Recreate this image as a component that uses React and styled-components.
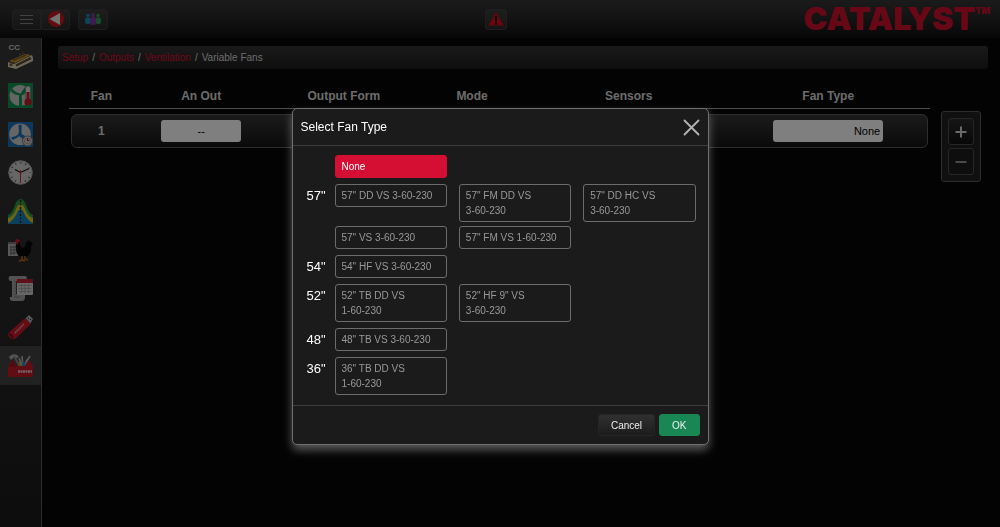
import React, { useState } from 'react';
import styled, { createGlobalStyle } from 'styled-components';

const GlobalStyle = createGlobalStyle`
  * {
    box-sizing: border-box;
  }

  body {
    margin: 0;
    background: #060606;
    color: #d8d8d8;
    font-family: 'Liberation Sans', Arial, sans-serif;
    font-size: 10px;
  }

  button, select {
    font-family: inherit;
    cursor: pointer;
  }
`;

const Page = styled.div`
  min-height: 100vh;
  display: flex;
  flex-direction: column;
`;

const TopBar = styled.header`
  height: 38px;
  padding: 0 10px 0 12px;
  display: grid;
  grid-template-columns: 1fr auto 1fr;
  align-items: center;
  background: linear-gradient(#363636, #262626 50%, #0e0e0e);
`;

const ToolGroup = styled.div`
  display: flex;
  gap: 8px;
`;

const ButtonPair = styled.div`
  display: flex;
`;

const ToolButton = styled.button`
  width: ${props => props.$width || 29}px;
  height: 21px;
  padding: 0;
  display: flex;
  align-items: center;
  justify-content: center;
  background: linear-gradient(#3c3c3c, #2a2a2a);
  border: 1px solid #3c3c3c;
  border-radius: ${props => props.$radius || '3px'};
`;

const AlertButton = styled(ToolButton)`
  margin-right: 10px;
`;

const Logo = styled.div`
  justify-self: end;
  display: flex;
  align-items: flex-start;
  color: #d0102e;
  font-family: Inter, 'Liberation Sans', sans-serif;
  font-size: 32px;
  font-weight: 900;
  line-height: 38px;
`;

const Trademark = styled.sup`
  font-size: 9px;
  line-height: 22px;
`;

const Body = styled.div`
  flex: 1;
  display: flex;
`;

const SideBar = styled.nav`
  width: 42px;
  background: linear-gradient(#383838, #1a1a1a);
  border-right: 1px solid #585858;
`;

const SideList = styled.ul`
  height: 347px;
  margin: 0;
  padding: 0;
  list-style: none;
  display: grid;
  grid-auto-rows: 1fr;
`;

const SideItem = styled.li`
  display: flex;
  background: ${props => (props.$active ? '#424242' : 'transparent')};
`;

const SideLink = styled.a`
  flex: 1;
  display: flex;
  flex-direction: column;
  align-items: center;
  justify-content: center;
  color: #d0d0d0;
  font-size: 8px;
  line-height: 8px;
  font-weight: bold;
  text-decoration: none;
`;

const SideLabel = styled.span`
  width: 24px;
`;

const Main = styled.main`
  flex: 1;
  padding: 8px 12px 0 16px;
`;

const Breadcrumb = styled.nav`
  height: 23px;
  padding: 0 4px;
  display: flex;
  align-items: center;
  gap: 4px;
  background: linear-gradient(#343434, #1c1c1c);
  border-radius: 3px;
`;

const Crumb = styled.a`
  color: #dc1034;
  text-decoration: none;
`;

const Content = styled.div`
  display: flex;
  align-items: flex-start;
  gap: 11px;
  padding: 14px 7px 0 11px;
`;

const FanTable = styled.table`
  flex: 1;
  display: block;
`;

const TableSection = styled.thead`
  display: block;
`;

const TableRow = styled.tr`
  display: grid;
  grid-template-columns: 59fr 141fr 145fr 112fr 202fr 198fr;
  align-items: center;
`;

const HeadRow = styled(TableRow)`
  height: 26px;
  padding: 0 3px;
  border-bottom: 1px solid #9a9a9a;
`;

const FanRow = styled(TableRow)`
  height: 34px;
  margin: 5px 2px 0;
  background: linear-gradient(#363636, #141414);
  border: 1px solid #5a5a5a;
  border-radius: 6px;
`;

const HeadCell = styled.th`
  padding: 0;
  color: #d8d8d8;
  font-size: 12px;
  text-align: center;
`;

const Cell = styled.td`
  padding: 0;
  display: flex;
  justify-content: center;
  font-size: 12px;
  font-weight: bold;
`;

const OutSelect = styled.select`
  width: 80px;
  height: 22px;
  padding: 0;
  appearance: none;
  background: #fff;
  border: none;
  border-radius: 3px;
  color: #000;
  font-size: 11px;
  text-align: center;
  text-align-last: center;
`;

const TypeButton = styled.button`
  width: 110px;
  height: 22px;
  padding: 0 3px;
  background: #fff;
  border: none;
  border-radius: 3px;
  color: #000;
  font-size: 11px;
  text-align: right;
`;

const RowControls = styled.div`
  width: 40px;
  margin-top: 28px;
  padding: 6px;
  display: flex;
  flex-direction: column;
  gap: 3px;
  background: #202020;
  border: 1px solid #5c5c5c;
  border-radius: 3px;
`;

const RowButton = styled.button`
  height: 27px;
  padding: 0;
  display: flex;
  align-items: center;
  justify-content: center;
  background: linear-gradient(#2c2c2c, #101010);
  border: 1px solid #4c4c4c;
  border-radius: 3px;
  color: #d4d4d4;

  &:disabled {
    background: #1c1c1c;
    color: #949494;
  }
`;

const Backdrop = styled.div`
  position: fixed;
  inset: 0;
  padding-top: 108px;
  display: flex;
  align-items: flex-start;
  justify-content: center;
  background: rgba(0, 0, 0, 0.5);
`;

const Dialog = styled.div`
  width: 417px;
  background: #1b1b1b;
  border: 1px solid #707070;
  border-radius: 5px;
  box-shadow: 0 5px 10px rgba(255, 255, 255, 0.35);
`;

const DialogHeader = styled.div`
  height: 37px;
  padding: 0 8px;
  display: flex;
  align-items: center;
  justify-content: space-between;
  border-bottom: 1px solid #3c3c3c;
`;

const DialogTitle = styled.h2`
  margin: 0;
  color: #fff;
  font-size: 12px;
  font-weight: normal;
`;

const CloseButton = styled.button`
  padding: 0;
  display: flex;
  background: none;
  border: none;
  color: #b4b4b4;
`;

const DialogBody = styled.div`
  padding: 9px 12px 10px;
  display: flex;
  flex-direction: column;
  gap: 6px;
`;

const SizeGroup = styled.div`
  display: grid;
  grid-template-columns: 22px 1fr;
  gap: 8px;
`;

const SizeLabel = styled.div`
  padding-left: 2px;
  color: #fff;
  font-size: 13px;
  line-height: 23px;
`;

const Options = styled.div`
  display: grid;
  grid-template-columns: repeat(3, 1fr);
  align-items: start;
  gap: 4px 12px;
`;

const Option = styled.button`
  padding: 3px 6px;
  background: ${props => (props.$selected ? '#d50f34' : 'transparent')};
  border: 1px solid ${props => (props.$selected ? '#d50f34' : '#6c6c6c')};
  border-radius: 3px;
  color: ${props => (props.$selected ? '#fff' : '#999')};
  font-size: 10px;
  line-height: 15px;
  text-align: left;
`;

const DialogFooter = styled.div`
  height: 39px;
  padding: 0 8px;
  display: flex;
  align-items: center;
  justify-content: flex-end;
  gap: 4px;
  border-top: 1px solid #3c3c3c;
`;

const FooterButton = styled.button`
  height: 22px;
  padding: 0 12px;
  background: ${props => (props.$primary ? '#198754' : 'linear-gradient(#303030, #1c1c1c)')};
  border: 1px solid ${props => (props.$primary ? '#198754' : '#262626')};
  border-radius: 3px;
  color: #eee;
  font-size: 10px;
`;

const Icon = ({ children }) => (
  <svg width="25" height="25" viewBox="0 0 25 25" aria-hidden="true">
    {children}
  </svg>
);

const MenuIcon = () => (
  <svg width="13" height="11" viewBox="0 0 13 11" stroke="#848484" aria-hidden="true">
    <path d="M0 1.5h13M0 5.5h13M0 9.5h13" />
  </svg>
);

const BackIcon = () => (
  <svg width="16" height="16" viewBox="0 0 16 16" aria-hidden="true">
    <circle cx="8" cy="8" r="8" fill="#c41820" />
    <path d="M1.5 8L12 2v12z" fill="#e4e4e4" />
  </svg>
);

const UsersIcon = () => (
  <svg width="16" height="12" viewBox="0 0 16 12" aria-hidden="true">
    <circle cx="3" cy="2.5" r="1.8" fill="#1a86b8" />
    <rect y="4.5" width="5.5" height="6.5" rx="2" fill="#1a86b8" />
    <circle cx="13" cy="2.5" r="1.8" fill="#2e9a50" />
    <rect x="10.5" y="4.5" width="5.5" height="6.5" rx="2" fill="#2e9a50" />
    <circle cx="8" cy="2" r="2" fill="#7c36a0" />
    <rect x="5" y="4" width="6" height="8" rx="2" fill="#7c36a0" />
  </svg>
);

const AlertIcon = () => (
  <svg width="16" height="14" viewBox="0 0 16 14" aria-hidden="true">
    <path d="M8 .5L16 13.5H0z" fill="#d00c14" />
    <path d="M7 4h2v5.5H7zM7 10.500h2v2H7z" fill="#180000" />
  </svg>
);

const HouseIcon = () => (
  <svg width="25" height="18" viewBox="0 0 25 18" aria-hidden="true">
    <path d="M1 11l16-8 7 2v4L8 17l-7-2z" fill="#3c2c14" />
    <path d="M1 9L17 2l6 1L7 11z" fill="#c8912c" />
    <path d="M5 8.5L18 3" stroke="#7c5c20" strokeWidth="1.5" />
    <path d="M0 10l6 2L24 3l1 3v3L8 17l-8-2z" fill="#d8ceb0" />
    <path d="M8 13.5L23 6" stroke="#54462c" strokeWidth="2.4" />
    <path d="M1.5 11.5h3v2.5h-3z" fill="#6c603c" />
    <path d="M12 3.5v-2M15 2.5v-2" stroke="#777" />
  </svg>
);

const FanTempIcon = () => (
  <Icon>
    <rect width="25" height="25" fill="#109550" />
    <circle cx="12" cy="12.5" r="10.5" fill="#c8c8c8" />
    <path d="M12 12.5Q6 12 2.5 8L4.5 5.5q2 4 8 5zM12 12q2-4 5-8l3 2q-2 5-7 7zM11 12h2.5q1 5 .5 11h-3z" fill="#109550" />
    <rect x="17.5" y="3" width="5" height="16" rx="2.5" fill="#ddd" stroke="#666" strokeWidth=".6" />
    <circle cx="20" cy="19" r="3.6" fill="#c41828" />
    <path d="M18.5 9h3v9h-3z" fill="#c41828" />
  </Icon>
);

const FanTimerIcon = () => (
  <Icon>
    <rect width="25" height="25" fill="#1c6fb8" />
    <circle cx="12" cy="12.3" r="10.8" fill="#ccc" />
    <path d="M11 12l-.5-9 3-.5q.5 5-.5 10zM12 11.5q4 1 8 5l-1.5 2.5q-4-2-7.500-5zM12.5 13q-4 4-8 5L3 15.5q5-1 9-4z" fill="#1c6fb8" />
    <circle cx="12" cy="12.3" r="2" fill="#1c6fb8" />
    <circle cx="19.5" cy="19" r="5" fill="#ccc" stroke="#777" />
    <circle cx="19.5" cy="19" r="3" fill="none" stroke="#888" strokeWidth=".7" />
    <path d="M19.5 19v-3M19.5 19l2-1" stroke="#b02030" />
  </Icon>
);

const ClockIcon = () => (
  <Icon>
    <circle cx="12.5" cy="12.5" r="11.8" fill="#ccc" stroke="#a8a8a8" />
    <circle cx="12.5" cy="12.5" r="9.7" fill="none" stroke="#444" strokeWidth="1.6" strokeDasharray="1 4.079" strokeDashoffset=".5" />
    <path d="M12.5 12.5L7 9.5M12.5 12.5L21 8.5" stroke="#111" strokeWidth="1.3" />
    <path d="M12.5 10v13" stroke="#d02838" />
    <circle cx="12.5" cy="12.5" r="1.2" fill="#d02838" />
  </Icon>
);

const CurveIcon = () => (
  <Icon>
    <path d="M0 16Q4 15 7 6Q9 0 12.5 0T18 6Q21 15 25 16v9H0z" fill="#2f9a48" />
    <path d="M0 19Q5 18 8 10Q10 5 12.5 5T17 10Q20 18 25 19v6H0z" fill="#d8c820" />
    <path d="M0 24Q5 22 8.5 15Q10.5 10 12.5 10T16.5 15Q20 22 25 24v1H0z" fill="#1680bc" />
    <path d="M12.5 1v24" stroke="#182028" strokeWidth="1.5" strokeDasharray="2 1.5" />
  </Icon>
);

const ChickenIcon = () => (
  <Icon>
    <path d="M0 4h10v14H0z" fill="#b0b0b0" />
    <path d="M0 4h7v2H0z" fill="#777" />
    <path d="M2 9h6M2 12h6M2 15h6M3 8v9M6 8v9" stroke="#555" strokeWidth=".8" />
    <path d="M8 4q3-3 4 1l1 4q4 2 5-4l2-3 5 3-2 4q1 7-5 10h-5Q8 17 8 10z" fill="#060606" stroke="#242424" strokeWidth=".5" />
    <path d="M7 3l1-2 3 .5 1 2-2 1v2.5L8.500 6z" fill="#d01828" />
    <path d="M14 18v5m0-1l-3 1m3-1l3 1M17 18v3l3 1" stroke="#b86428" strokeWidth="1.4" fill="none" />
  </Icon>
);

const ReportIcon = () => (
  <Icon>
    <path d="M2 0h15q2 0 2 3v2H8v13h9v3q0 4-3 4H4q-3-1-2-4h2V5H2Q-1 2 2 0z" fill="#a4a4a4" />
    <path d="M6 6h8M6 9h8M6 12h8M6 15h8M6 18h8M6 21h6" stroke="#777" />
    <rect x="9" y="4" width="16" height="15" rx="1" fill="#ccc" />
    <path d="M9 3h16v4H9z" fill="#c02030" />
    <path d="M10.5 9.5h13M10.5 12.5h13M10.5 15.5h13M13.5 8v9M17 8v9M20.5 8v9" stroke="#999" strokeWidth=".8" />
  </Icon>
);

const UsbIcon = () => (
  <Icon>
    <path d="M17 4l4-4 4 4-3 5z" fill="#a8b0b8" />
    <path d="M20 3l1 1M22 4l1 1" stroke="#333" />
    <path d="M.5 18L16 4q1.500-1 3 .5l2.500 3q1 1.500 0 3L7 24q-2 1-3.500 0l-3-3q-1-1.500 0-3z" fill="#cc1828" />
    <path d="M.5 19q4 .5 4.500 5.500" stroke="#70101c" strokeWidth="1.5" fill="none" />
    <path d="M7 18L16 9" stroke="#e0a0a8" strokeWidth="1.8" strokeDasharray="1.5 .7" />
  </Icon>
);

const ToolboxIcon = () => (
  <Icon>
    <path d="M1 4q3-4 8-2l2 2-2 1-3-1-3 3z" fill="#aaa" />
    <path d="M6 3l6 11" stroke="#8a8a8a" strokeWidth="2" />
    <path d="M22 3l-7 11M14 3l1 11M11 5l3 8M18 8l3-3" stroke="#b4b4b4" strokeWidth="1.6" />
    <path d="M16 9l-1 5" stroke="#2888b8" strokeWidth="3" />
    <path d="M11 9l2 5" stroke="#c09838" strokeWidth="2" />
    <path d="M4 7l5 6h8l4-6 4 6v11H0V13z" fill="#c41828" />
    <path d="M0 14l4-6 5 6z" fill="#a01420" />
    <path d="M10 18.5h14" stroke="#e4c0c4" strokeWidth="2.4" strokeDasharray="2 .5" />
  </Icon>
);

const CloseIcon = () => (
  <svg width="17" height="17" viewBox="0 0 17 17" stroke="currentColor" strokeWidth="1.8" strokeLinecap="round" aria-hidden="true">
    <path d="M1.5 1.5l14 14M15.5 1.5l-14 14" />
  </svg>
);

const PlusIcon = () => (
  <svg width="12" height="12" viewBox="0 0 12 12" stroke="currentColor" strokeWidth="2" aria-hidden="true">
    <path d="M.5 6h11M6 .5v11" />
  </svg>
);

const MinusIcon = () => (
  <svg width="12" height="12" viewBox="0 0 12 12" stroke="currentColor" strokeWidth="2" aria-hidden="true">
    <path d="M.5 6h11" />
  </svg>
);

const sideItems = [
  { name: 'House', label: 'CC', icon: HouseIcon },
  { name: 'Temperature', icon: FanTempIcon },
  { name: 'Fan timers', icon: FanTimerIcon },
  { name: 'Clock', icon: ClockIcon },
  { name: 'Curves', icon: CurveIcon },
  { name: 'Flock', icon: ChickenIcon },
  { name: 'Reports', icon: ReportIcon },
  { name: 'USB', icon: UsbIcon },
  { name: 'Setup', icon: ToolboxIcon, active: true },
];

const columns = ['Fan', 'An Out', 'Output Form', 'Mode', 'Sensors', 'Fan Type'];

const fanGroups = [
  { size: '', types: ['None'] },
  {
    size: '57"',
    types: [
      '57" DD VS 3-60-230',
      '57" FM DD VS 3-60-230',
      '57" DD HC VS 3-60-230',
      '57" VS 3-60-230',
      '57" FM VS 1-60-230',
    ],
  },
  { size: '54"', types: ['54" HF VS 3-60-230'] },
  { size: '52"', types: ['52" TB DD VS 1-60-230', '52" HF 9" VS 3-60-230'] },
  { size: '48"', types: ['48" TB VS 3-60-230'] },
  { size: '36"', types: ['36" TB DD VS 1-60-230'] },
];

// keep the phase/voltage code in one piece when the name wraps
const noBreak = (name) => name.replace(/-/g, '\u2060-\u2060');

function FanTypeDialog({ value, onClose, onSelect }) {
  const [selected, setSelected] = useState(value);

  return (
    <Backdrop>
      <Dialog role="dialog" aria-modal="true" aria-labelledby="fan-type-title">
        <DialogHeader>
          <DialogTitle id="fan-type-title">Select Fan Type</DialogTitle>
          <CloseButton aria-label="Close" onClick={onClose}>
            <CloseIcon />
          </CloseButton>
        </DialogHeader>

        <DialogBody>
          {fanGroups.map(group => (
            <SizeGroup key={group.size}>
              <SizeLabel>{group.size}</SizeLabel>
              <Options>
                {group.types.map(type => (
                  <Option
                    key={type}
                    $selected={type === selected}
                    aria-pressed={type === selected}
                    onClick={() => setSelected(type)}
                  >
                    {noBreak(type)}
                  </Option>
                ))}
              </Options>
            </SizeGroup>
          ))}
        </DialogBody>

        <DialogFooter>
          <FooterButton onClick={onClose}>Cancel</FooterButton>
          <FooterButton $primary onClick={() => onSelect(selected)}>OK</FooterButton>
        </DialogFooter>
      </Dialog>
    </Backdrop>
  );
}

function App() {
  const [dialogOpen, setDialogOpen] = useState(true);
  const [fanType, setFanType] = useState('None');

  const handleSelect = (type) => {
    setFanType(type);
    setDialogOpen(false);
  };

  return (
    <Page>
      <GlobalStyle />
      <TopBar>
        <ToolGroup>
          <ButtonPair>
            <ToolButton $radius="3px 0 0 3px" aria-label="Menu"><MenuIcon /></ToolButton>
            <ToolButton $radius="0 3px 3px 0" aria-label="Back"><BackIcon /></ToolButton>
          </ButtonPair>
          <ToolButton $width={30} aria-label="Users"><UsersIcon /></ToolButton>
        </ToolGroup>
        <AlertButton $width={22} aria-label="Alarms"><AlertIcon /></AlertButton>
        <Logo>
          CATALYST<Trademark>TM</Trademark>
        </Logo>
      </TopBar>

      <Body>
        <SideBar>
          <SideList>
            {sideItems.map(({ name, label, icon: ItemIcon, active }) => (
              <SideItem key={name} $active={active}>
                <SideLink href="#" aria-label={name}>
                  {label && <SideLabel>{label}</SideLabel>}
                  <ItemIcon />
                </SideLink>
              </SideItem>
            ))}
          </SideList>
        </SideBar>

        <Main>
          <Breadcrumb>
            <Crumb href="#">Setup</Crumb>
            <span>/</span>
            <Crumb href="#">Outputs</Crumb>
            <span>/</span>
            <Crumb href="#">Ventilation</Crumb>
            <span>/</span>
            <span>Variable Fans</span>
          </Breadcrumb>

          <Content>
            <FanTable>
              <TableSection>
                <HeadRow>
                  {columns.map(column => (
                    <HeadCell key={column}>{column}</HeadCell>
                  ))}
                </HeadRow>
              </TableSection>
              <TableSection as="tbody">
                <FanRow>
                  <Cell>1</Cell>
                  <Cell>
                    <OutSelect aria-label="Analog output">
                      <option>--</option>
                    </OutSelect>
                  </Cell>
                  <Cell />
                  <Cell />
                  <Cell />
                  <Cell>
                    <TypeButton aria-haspopup="dialog" onClick={() => setDialogOpen(true)}>
                      {fanType}
                    </TypeButton>
                  </Cell>
                </FanRow>
              </TableSection>
            </FanTable>

            <RowControls>
              <RowButton aria-label="Add fan"><PlusIcon /></RowButton>
              <RowButton aria-label="Remove fan" disabled><MinusIcon /></RowButton>
            </RowControls>
          </Content>
        </Main>
      </Body>

      {dialogOpen && (
        <FanTypeDialog
          value={fanType}
          onClose={() => setDialogOpen(false)}
          onSelect={handleSelect}
        />
      )}
    </Page>
  );
}

export default App;
